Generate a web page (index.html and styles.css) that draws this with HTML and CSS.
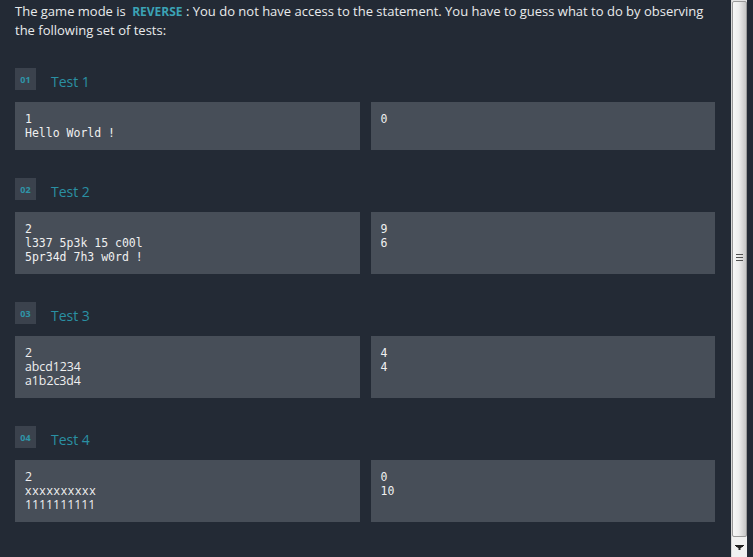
FILE: index.html
```html
<!DOCTYPE html>
<html>
<head>
<meta charset="utf-8">
<link rel="stylesheet" href="styles.css">
</head>
<body>
<div class="frame">
  <main class="content">
    <p class="intro">The game mode is <span class="mode">REVERSE</span> : You do not have access to the statement. You have to guess what to do by observing the following set of tests:</p>

    <section class="test">
      <div class="test-head"><span class="badge">01</span><span class="title">Test 1</span></div>
      <div class="io">
        <div class="box mono">1<br>Hello World !</div>
        <div class="box mono">0</div>
      </div>
    </section>

    <section class="test">
      <div class="test-head"><span class="badge">02</span><span class="title">Test 2</span></div>
      <div class="io">
        <div class="box mono">2<br>l337 5p3k 15 c00l<br>5pr34d 7h3 w0rd !</div>
        <div class="box mono">9<br>6</div>
      </div>
    </section>

    <section class="test">
      <div class="test-head"><span class="badge">03</span><span class="title">Test 3</span></div>
      <div class="io">
        <div class="box sans">2<br>abcd1234<br>a1b2c3d4</div>
        <div class="box mono">4<br>4</div>
      </div>
    </section>

    <section class="test">
      <div class="test-head"><span class="badge">04</span><span class="title">Test 4</span></div>
      <div class="io">
        <div class="box sans">2<br><span class="wide">xxxxxxxxxx</span><br>1111111111</div>
        <div class="box mono">0<br>10</div>
      </div>
    </section>
  </main>

  <aside class="scrollbar">
    <div class="thumb">
      <div class="grip"><i></i><i></i><i></i></div>
    </div>
    <div class="arrow">
      <svg width="9" height="5" viewBox="0 0 9 5"><path d="M0 0h9v1H0zM1 1h7v1H1zM2.5 2h4v1h-4zM3.5 3h2v2h-2z" fill="#222"/></svg>
    </div>
  </aside>
</div>
</body>
</html>
```

FILE: styles.css
```css
* {
  box-sizing: border-box;
}

html, body {
  margin: 0;
  padding: 0;
  background: #232a35;
  overflow: hidden;
}

.frame {
  display: flex;
  align-items: flex-start;
  width: 753px;
  height: 557px;
}

.content {
  flex: 0 0 731px;
  padding: 2px 16px 0 15px;
  font-family: "Open Sans", "Liberation Sans", sans-serif;
  color: #e9eaec;
}

.intro {
  margin: 0;
  font-size: 13px;
  line-height: 19px;
}

.mode {
  color: #3ba3b5;
  font-weight: bold;
  font-size: 12px;
  margin-left: 3px;
}

.test {
  margin-top: 28px;
}

.test + .test {
  margin-top: 28px;
}

.test-head {
  display: flex;
  align-items: center;
  height: 22px;
  margin-bottom: 12px;
}

.badge {
  width: 21px;
  height: 22px;
  background: #3b424d;
  color: #2f95a8;
  font-size: 9px;
  font-weight: bold;
  display: flex;
  align-items: center;
  justify-content: center;
}

.title {
  margin-left: 15px;
  padding-top: 4px;
  color: #2a90a3;
  font-size: 14px;
}

.io {
  display: flex;
  gap: 11px;
}

.box {
  flex: 1;
  background: #474e58;
  padding: 10px 10px;
  color: #f0f0f0;
  line-height: 14px;
}

.mono {
  font-family: "DejaVu Sans Mono", "Liberation Mono", monospace;
  font-size: 11.5px;
}

.sans {
  font-family: "Open Sans", "Liberation Sans", sans-serif;
  font-size: 12.3px;
}

.wide {
  letter-spacing: 0.7px;
}

.scrollbar {
  flex: 0 0 16px;
  width: 16px;
  height: 557px;
  background-color: #e4e4e4;
  border-left: 1px solid #d8d8d8;
}

.thumb {
  height: 536px;
  margin-top: 1px;
  border: 1px solid #999999;
  border-radius: 2px;
  background-color: #e8e8e8;
  background-image: linear-gradient(to right, #f7f7f7, #ededed 45%, #d4d4d4 80%, #c6c6c6);
  padding-top: 252px;
}

.grip {
  width: 7px;
  margin: 0 auto;
}

.grip i {
  display: block;
  height: 1px;
  margin-bottom: 2px;
  background-color: #505050;
}

.arrow {
  height: 20px;
  background-color: #f1f1f1;
  display: flex;
  align-items: center;
  justify-content: center;
}
```
